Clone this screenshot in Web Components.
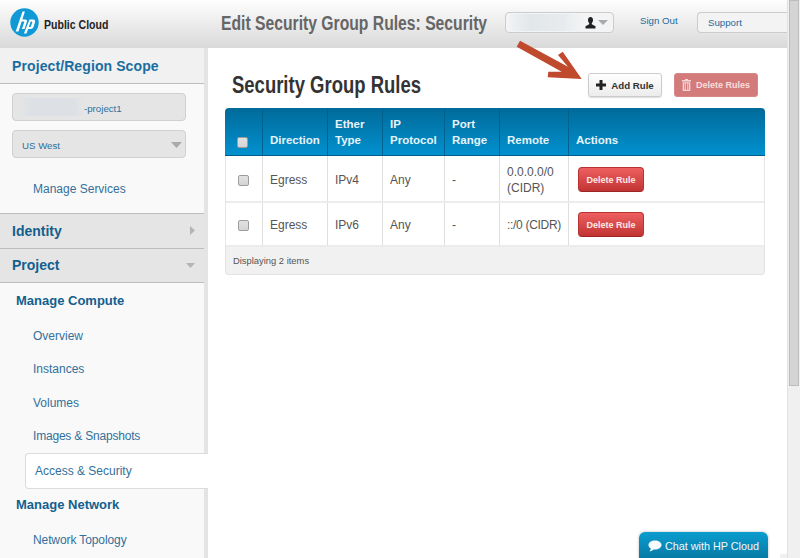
<!DOCTYPE html>
<html>
<head>
<meta charset="utf-8">
<title>Security Group Rules</title>
<style>
html, body { margin: 0; height: 558px; overflow: hidden; background: #fff; font-family: "Liberation Sans", Arial, sans-serif; }
</style>
</head>
<body>
<app-shell>
  <top-bar slot="top"></top-bar>
  <side-nav slot="side">
    <nav-head kind="scope">Project/Region Scope</nav-head>
    <nav-body style="height:130px">
      <pick-box><blur-patch style="width:65px"></blur-patch>-project1</pick-box>
      <pick-box arrow>US West</pick-box>
      <nav-link style="margin-top:21px">Manage Services</nav-link>
    </nav-body>
    <nav-head kind="right">Identity</nav-head>
    <nav-head kind="down">Project</nav-head>
    <nav-body style="padding-top:10.6px">
      <nav-group>Manage Compute</nav-group>
      <nav-link>Overview</nav-link>
      <nav-link>Instances</nav-link>
      <nav-link>Volumes</nav-link>
      <nav-link style="letter-spacing:-.2px">Images &amp; Snapshots</nav-link>
      <nav-link active>Access &amp; Security</nav-link>
      <nav-group>Manage Network</nav-group>
      <nav-link style="letter-spacing:-.1px">Network Topology</nav-link>
    </nav-body>
  </side-nav>
  <rules-page slot="main"></rules-page>
  <fake-scroll slot="scroll"></fake-scroll>
</app-shell>
<red-arrow></red-arrow>
<chat-tab>Chat with HP Cloud</chat-tab>

<script>
class AppShell extends HTMLElement {
	constructor() {
		super();
		this.attachShadow({ mode: "open" });
		this.shadowRoot.innerHTML = `
    <style>
    :host { display: grid; width: 800px; height: 558px; overflow: hidden;
      grid-template-columns: 208px 579px 13px; grid-template-rows: 48px 510px; }
    ::slotted([slot=top]) { grid-column: 1 / 3; }
    ::slotted([slot=scroll]) { grid-column: 3; grid-row: 1 / 3; }
    </style>
    <slot name="top"></slot><slot name="scroll"></slot><slot name="side"></slot><slot name="main"></slot>`;
	}
}
customElements.define("app-shell", AppShell);

class BlurPatch extends HTMLElement {
	constructor() {
		super();
		this.attachShadow({ mode: "open" });
		this.shadowRoot.innerHTML = `
    <style>
    :host { display: inline-block; height: 18px; vertical-align: middle;
      background: linear-gradient(90deg, rgba(222,226,230,0), #dde1e5 18%, #dde1e5 85%, rgba(222,226,230,0)); }
    </style>`;
	}
}
customElements.define("blur-patch", BlurPatch);

class TopBar extends HTMLElement {
	constructor() {
		super();
		this.attachShadow({ mode: "open" });
		this.shadowRoot.innerHTML = `
    <style>
    :host { display: flex; align-items: center; height: 48px; overflow: hidden;
      background: linear-gradient(#fefefe, #d9d9d9); }
    .logo { display: flex; align-items: center; width: 221px; padding-left: 10px; box-sizing: border-box; }
    .logo svg { margin-top: -3px; }
    .brand { display: block; margin-left: 5px; font-weight: bold; font-size: 13px; color: #222; white-space: nowrap;
      transform: scaleX(.81); transform-origin: left; }
    h1 { margin: -2px 0 0; width: 284px; font-size: 20px; font-weight: bold; color: #666; white-space: nowrap;
      transform: scaleX(.785); transform-origin: left; }
    .user { display: flex; align-items: center; width: 109px; height: 21px; box-sizing: border-box;
      margin-top: -3px; padding-right: 5px; background: #f2f4f5; border: 1px solid #ccc; border-radius: 4px; }
    .user i { flex: 1; height: 17px; margin: 0 3px; background: linear-gradient(90deg, #f0f2f4, #e2e7ea 30%, #e8ebee 75%, #f3f3f3); }
    .out { margin: -8px 0 0 26px; width: 57px; font-size: 9.7px; color: #1c6a9c; }
    .support { flex: 1; height: 21px; box-sizing: border-box; margin-top: -3px; padding: 4px 0 0 10px;
      font-size: 9.7px; color: #1c6a9c; background: #f3f3f3; border: 1px solid #ccc; border-right: 0; border-radius: 4px 0 0 4px; }
    svg { display: block; }
    </style>
    <div class="logo">
      <svg width="29" height="29" viewBox="0 0 29 29">
        <circle cx="14.5" cy="14.5" r="14.2" fill="#0f9ad7"/>
        <path fill="#fff" d="M12.500 3.500h2.400L8.500 23.500H5.700zM10.500 11.500h5q2 0 1.500 2L14.500 21h-2.600l2.400-7q.2-.5-.4-.5H10zM19.500 11.500H23q2.800 0 2 2.800L23.500 19q-.7 2-3 2H18l.5-1.900H20q.8 0 1-.8l1.300-4q.2-.8-.6-.8h-1L16.500 25.500h-2.600z"/>
      </svg>
      <span class="brand">Public Cloud</span>
    </div>
    <h1>Edit Security Group Rules: Security</h1>
    <div class="user">
      <i></i>
      <svg width="11" height="12" viewBox="0 0 11 12"><path d="M5.500 0C3.700 0 3 1.400 3 3c0 1.300.5 2.400 1.200 3v1.200L.5 9.200V11.500h10V9.200L6.800 7.200V6C7.500 5.400 8 4.300 8 3c0-1.600-.7-3-2.500-3z" fill="#222"/></svg>
      <svg width="10" height="5" viewBox="0 0 10 5" style="margin-left:2px"><path d="M0 0h10L5 5z" fill="#aaa"/></svg>
    </div>
    <div class="out">Sign Out</div>
    <div class="support">Support</div>`;
	}
}
customElements.define("top-bar", TopBar);

class FakeScroll extends HTMLElement {
	constructor() {
		super();
		this.attachShadow({ mode: "open" });
		this.shadowRoot.innerHTML = `
    <style>
    :host { display: block; position: relative; background: #f0f0f0; border-left: 1px solid #e2e2e2; box-sizing: border-box; padding: 0 1px 0 1px; }
    div { height: 386px; background: #d4d4d4; border: 1px solid #bcbcbc; box-sizing: border-box; }
    span { position: absolute; left: -8px; bottom: 0; width: 7px; height: 4px; background: #f0f0f0; }
    </style>
    <div></div><span></span>`;
	}
}
customElements.define("fake-scroll", FakeScroll);

class SideNav extends HTMLElement {
	constructor() {
		super();
		this.attachShadow({ mode: "open" });
		this.shadowRoot.innerHTML = `
    <style>
    :host { display: block; height: 510px; overflow: hidden; background: #e4e4e4; padding-right: 4px; box-sizing: border-box; }
    </style>
    <slot></slot>`;
	}
}
customElements.define("side-nav", SideNav);

class NavHead extends HTMLElement {
	constructor() {
		super();
		this.attachShadow({ mode: "open" });
		const kind = this.getAttribute("kind");
		const scope = kind === "scope";
		const arrow = kind === "right"
			? `<svg width="5" height="9"><path d="M0 0l5 4.500L0 9z" fill="#b5b5b5"/></svg>`
			: kind === "down" ? `<svg width="9" height="5"><path d="M0 0h9L4.500 5z" fill="#b5b5b5"/></svg>` : "";
		this.shadowRoot.innerHTML = `
    <style>
    :host { display: flex; align-items: center; justify-content: space-between; box-sizing: border-box;
      height: ${scope ? 36 : 34.5}px; padding: 0 9px 0 12px; font-weight: bold; font-size: 14px;
      letter-spacing: ${scope ? ".1px" : "0"}; color: ${scope ? "#1b6da0" : "#135f8e"};
      background: ${scope ? "#f1f1f1" : "#e5e5e5"}; border-bottom: 1px solid #bdbdbd; }
    </style>
    <slot></slot>${arrow}`;
	}
}
customElements.define("nav-head", NavHead);

class NavBody extends HTMLElement {
	constructor() {
		super();
		this.attachShadow({ mode: "open" });
		this.shadowRoot.innerHTML = `
    <style>
    :host { display: block; background: #f9f9f9; box-sizing: border-box; padding: 9px 0 0; border-bottom: 1px solid #bdbdbd; }
    </style>
    <slot></slot>`;
	}
}
customElements.define("nav-body", NavBody);

class PickBox extends HTMLElement {
	constructor() {
		super();
		this.attachShadow({ mode: "open" });
		const arrow = this.hasAttribute("arrow")
			? `<svg width="11" height="6" style="margin-left:auto"><path d="M0 0h11L5.500 6z" fill="#aaa"/></svg>` : "";
		this.shadowRoot.innerHTML = `
    <style>
    :host { display: flex; align-items: center; height: 28px; width: 174px; box-sizing: border-box;
      margin: 0 0 9px 12px; padding: 2px 3px 0 9px; font-size: 9.7px; color: #2d6f9c;
      background: #e5e5e5; border: 1px solid #d0d0d0; border-radius: 4px; white-space: nowrap; }
    ::slotted(blur-patch) { margin: -2px 0 0 -3px; }
    </style>
    <slot></slot>${arrow}`;
	}
}
customElements.define("pick-box", PickBox);

class NavGroup extends HTMLElement {
	constructor() {
		super();
		this.attachShadow({ mode: "open" });
		this.shadowRoot.innerHTML = `
    <style>
    :host { display: block; height: 33px; line-height: 16px; margin-top: -1px; padding-left: 16px;
      font-size: 13px; font-weight: bold; color: #135f8e; }
    </style>
    <slot></slot>`;
	}
}
customElements.define("nav-group", NavGroup);

class NavLink extends HTMLElement {
	constructor() {
		super();
		this.attachShadow({ mode: "open" });
		this.shadowRoot.innerHTML = `
    <style>
    :host { display: block; box-sizing: border-box; height: 33.6px; padding: 2px 0 0 33px; line-height: 16px;
      font-size: 12px; color: #33709b; }
    :host([active]) { height: 36px; margin: -7px -4px 9px 25px; padding: 9px 0 0 9px; background: #fff;
      border: 1px solid #dcdcdc; border-right: 0; border-radius: 4px 0 0 4px; }
    </style>
    <slot></slot>`;
	}
}
customElements.define("nav-link", NavLink);

class RedBtn extends HTMLElement {
	constructor() {
		super();
		this.attachShadow({ mode: "open" });
		this.shadowRoot.innerHTML = `
    <style>
    :host { display: inline-flex; align-items: center; justify-content: center; box-sizing: border-box;
      width: 66px; height: 25px; margin: -1px 0 0 2px; font-size: 9px; font-weight: bold; color: #fde9e9;
      background: linear-gradient(#ee5f5f, #c23434); border: 1px solid #b83232; border-bottom-color: #9c2626; border-radius: 4px; }
    </style>
    <slot></slot>`;
	}
}
customElements.define("red-btn", RedBtn);

class RuleRow extends HTMLElement {
	constructor() {
		super();
		this.attachShadow({ mode: "open" });
		const head = this.hasAttribute("head");
		const h = this.getAttribute("h");
		const top = this.getAttribute("pad") || 0;
		this.shadowRoot.innerHTML = `
    <style>
    :host { display: grid; grid-template-columns: ${head ? 38 : 37}px 65px 55px 62px 55px 69px 1fr; height: ${h}px; box-sizing: border-box;
      ${head ? "background: linear-gradient(#016a99, #0191cf); border-bottom: 1px solid #015c88;"
		: "background: #fff; border-bottom: 2px solid #ececec;"} }
    ::slotted(*) { box-sizing: border-box; padding: ${head ? "0 0 7px 7px" : top + "px 0 0 7px"}; display: flex; align-items: ${head ? "flex-end" : "center"};
      font-size: ${head ? 11.5 : 12}px; line-height: 16px; font-weight: ${head ? "bold" : "normal"};
      color: ${head ? "#e6f4fb" : "#555"}; border-right: 1px solid ${head ? "#01618e" : "#dedede"}; }
    ::slotted(:last-child) { border-right: 0; }
    </style>
    <slot></slot>`;
	}
}
customElements.define("rule-row", RuleRow);

class TickBox extends HTMLElement {
	constructor() {
		super();
		this.attachShadow({ mode: "open" });
		this.shadowRoot.innerHTML = `
    <style>
    :host { display: block; width: 11px; height: 11px; margin-left: 5px; box-sizing: border-box;
      background: linear-gradient(#e2e2e2, #d4d4d4); border: 1px solid #9d9d9d; border-radius: 2px; }
    </style>`;
	}
}
customElements.define("tick-box", TickBox);

class RulesPage extends HTMLElement {
	constructor() {
		super();
		this.attachShadow({ mode: "open" });
		this.shadowRoot.innerHTML = `
    <style>
    :host { display: block; padding: 25px 22px 0 17px; height: 510px; box-sizing: border-box; overflow: hidden; background: #fff; }
    .bar { display: flex; align-items: center; height: 24px; padding: 0 7px 0 7px; margin-bottom: 11px; }
    h2 { flex: 1; margin: 0; font-size: 24px; font-weight: bold; color: #333; white-space: nowrap;
      transform: scaleX(.77); transform-origin: left; }
    .btn { display: flex; align-items: center; justify-content: center; gap: 5px; height: 24px; box-sizing: border-box; border-radius: 3px; }
    .add { width: 74px; color: #333; font-size: 9.7px; font-weight: bold; background: linear-gradient(#fff, #ececec); border: 1px solid #ccc; box-shadow: 0 1px 1px #ddd; }
    .del { width: 84px; margin-left: 12px; color: #f7dede; background: #d37a7a; border: 1px solid #d78888; font-size: 9px; font-weight: bold; }
    .table { border-radius: 4px 4px 0 0; overflow: hidden; }
    .foot { height: 28px; box-sizing: border-box; padding: 0 0 1px 7px; display: flex; align-items: center; font-size: 9.4px; color: #555;
      background: #f1f1f1; border: 1px solid #e2e2e2; border-top: 0; border-radius: 0 0 4px 4px; }
    .edge { border-left: 1px solid #e6e6e6; border-right: 1px solid #e6e6e6; }
    </style>
    <div class="bar">
      <h2>Security Group Rules</h2>
      <div class="btn add">
        <svg width="10" height="10"><path d="M3.500 0h3v3.500H10v3H6.500V10h-3V6.500H0v-3h3.500z" fill="#222"/></svg>
        Add Rule
      </div>
      <div class="btn del">
        <svg width="9" height="12" viewBox="0 0 9 12"><path d="M3 0h3v1h3v1.500H0V1h3zM.7 3.200h7.600V12H.7zM2.300 4.300v6.500h1V4.300zM4 4.300v6.500h1V4.300zM5.700 4.300v6.500h1V4.300z" fill="#f3d6d6" fill-rule="evenodd"/></svg>
        Delete Rules
      </div>
    </div>
    <div class="table">
      <rule-row head h="48">
        <div><tick-box></tick-box></div><div>Direction</div><div>Ether<br>Type</div><div>IP<br>Protocol</div><div>Port<br>Range</div><div>Remote</div><div>Actions</div>
      </rule-row>
    </div>
    <div class="edge">
    <rule-row h="47" pad="3">
      <div><tick-box></tick-box></div><div>Egress</div><div>IPv4</div><div>Any</div><div>-</div><div>0.0.0.0/0<br>(CIDR)</div><div><red-btn>Delete Rule</red-btn></div>
    </rule-row>
    <rule-row h="44" pad="2">
      <div><tick-box></tick-box></div><div>Egress</div><div>IPv6</div><div>Any</div><div>-</div><div style="letter-spacing:-.3px">::/0 (CIDR)</div><div><red-btn>Delete Rule</red-btn></div>
    </rule-row>
    </div>
    <div class="foot">Displaying 2 items</div>`;
	}
}
customElements.define("rules-page", RulesPage);

class RedArrow extends HTMLElement {
	constructor() {
		super();
		this.attachShadow({ mode: "open" });
		this.shadowRoot.innerHTML = `
    <style>
    :host { position: absolute; left: 0; top: 0; width: 800px; height: 100px; pointer-events: none; }
    </style>
    <svg width="800" height="100"><path d="M520 40.700L568 66.700 558 55 562.700 51.700 581.700 79 547.700 77.300 548.300 71.700 561.700 71.700 516.700 46.700z" fill="#c04a2d"/></svg>`;
	}
}
customElements.define("red-arrow", RedArrow);

class ChatTab extends HTMLElement {
	constructor() {
		super();
		this.attachShadow({ mode: "open" });
		this.shadowRoot.innerHTML = `
    <style>
    :host { position: absolute; left: 639px; top: 532px; width: 129px; height: 26px; box-sizing: border-box; display: flex; align-items: center;
      gap: 3px; padding: 1px 0 0 9px; font-size: 10.8px; color: #f2fafd; background: linear-gradient(#0a9dcf, #077aa6);
      border-radius: 6px 6px 0 0; box-shadow: 0 0 2px 1px #ddd; white-space: nowrap; }
    </style>
    <svg width="14" height="12" viewBox="0 0 14 12"><path d="M7 .5c3.600 0 6.500 2 6.500 4.500S10.600 9.500 7 9.500c-.5 0-1 0-1.500-.1C4.500 10.500 3 11.200 1.500 11.300 2.300 10.500 2.800 9.500 2.900 8.600 1.400 7.800.5 6.500.5 5 .5 2.500 3.400.5 7 .5z" fill="#f5fbfe"/></svg>
    <slot></slot>`;
	}
}
customElements.define("chat-tab", ChatTab);
</script>
</body>
</html>
